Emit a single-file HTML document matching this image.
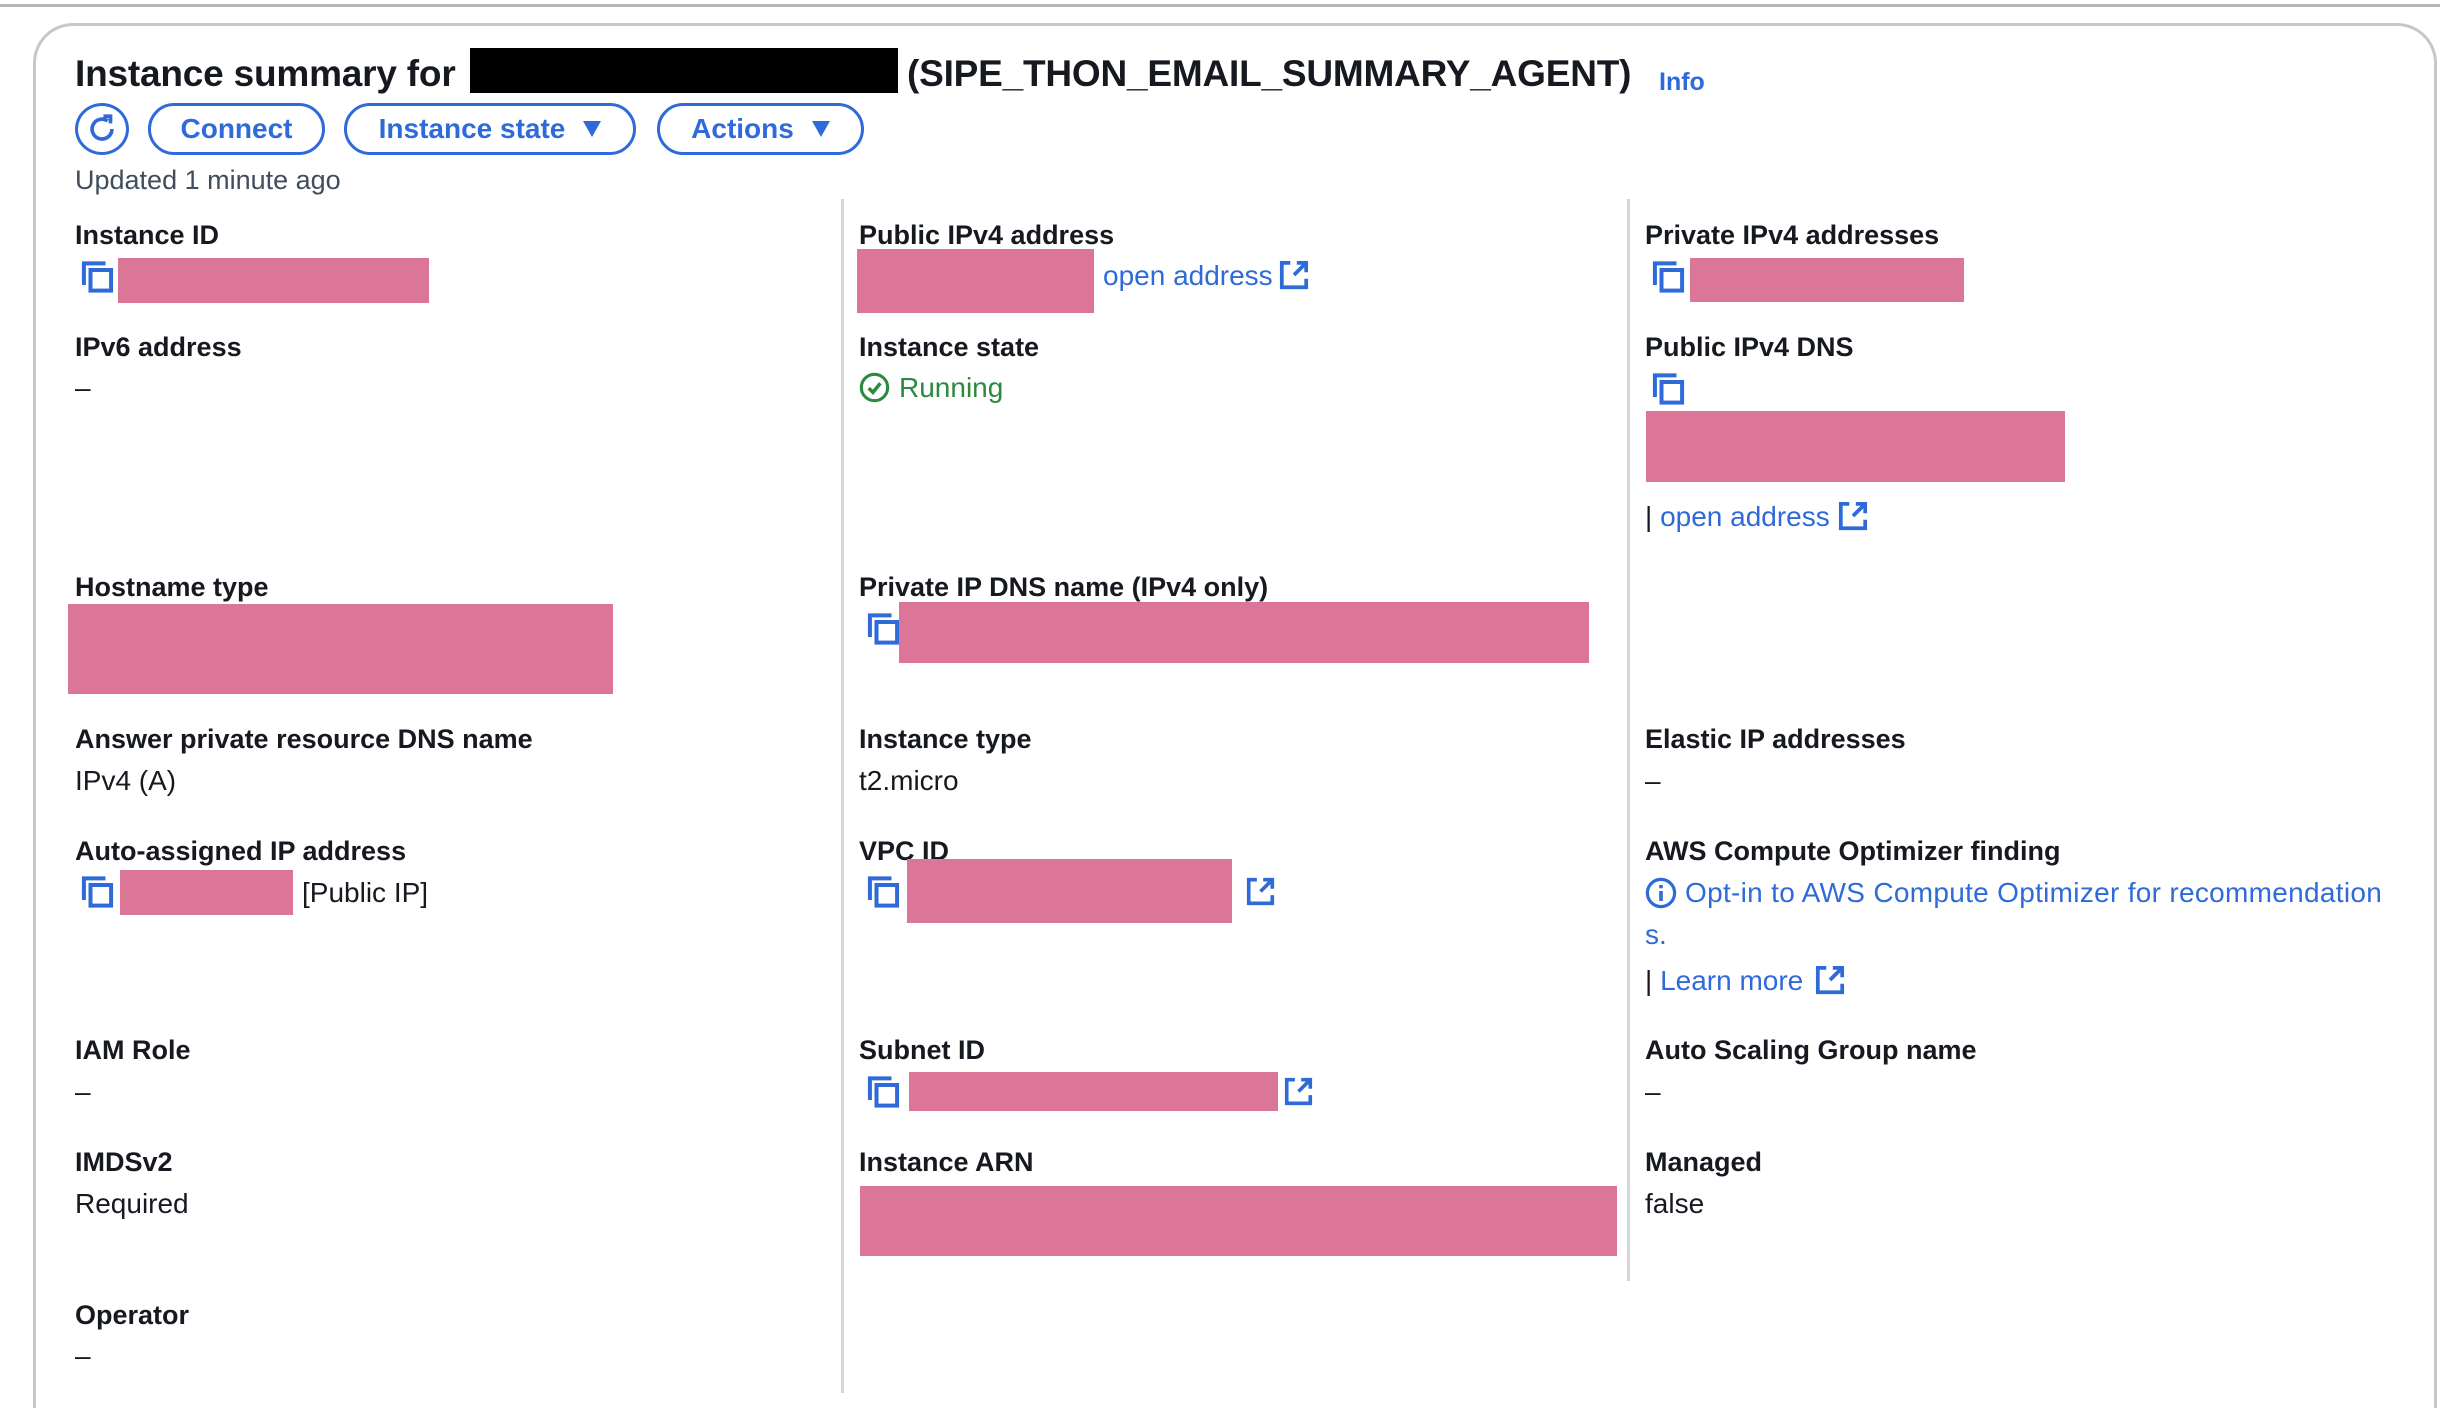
<!DOCTYPE html>
<html><head><meta charset="utf-8"><style>
*{margin:0;padding:0;box-sizing:border-box}
html,body{width:2440px;height:1408px;overflow:hidden}
body{background:#fff;position:relative;font-family:"Liberation Sans",sans-serif;color:#16191f}
.a{position:absolute;white-space:nowrap}
.topline{position:absolute;left:0;top:4px;width:2440px;height:3px;background:#b4b6ba}
.card{position:absolute;left:33px;top:23px;width:2404px;height:1385px;border:3px solid #c6c6cd;border-bottom:none;border-radius:40px 40px 0 0}
.t{font-size:37px;font-weight:bold;top:53px;letter-spacing:-0.2px}
.btn{position:absolute;top:103px;height:52px;border:3px solid #2e6ad9;border-radius:28px;color:#2e6ad9;font-weight:bold;font-size:28px;display:flex;align-items:center;justify-content:center;gap:18px}
.tri{width:0;height:0;border-left:9px solid transparent;border-right:9px solid transparent;border-top:16px solid #2e6ad9}
.l{font-size:27px;font-weight:bold}
.v{font-size:28px}
.b{color:#2e6ad9}
.p{position:absolute;background:#db7699}
.div{position:absolute;width:3px;background:#d5d6da}
svg{position:absolute}
</style></head><body>
<div class="topline"></div>
<div class="card"></div>
<div class="a t" style="left:75px">Instance summary for</div>
<div style="position:absolute;left:470px;top:48px;width:428px;height:45px;background:#000"></div>
<div class="a t" style="left:907px">(SIPE_THON_EMAIL_SUMMARY_AGENT)</div>
<div class="a b" style="left:1659px;top:68px;font-size:25px;font-weight:bold">Info</div>

<div class="btn" style="left:75px;width:54px;border-radius:50%"><svg style="position:static" width="34" height="34" viewBox="0 0 24 24"><path d="M19 12a7 7 0 1 1-3-5.7" fill="none" stroke="#2e6ad9" stroke-width="2.6"/><path d="M13 3h5v5" fill="none" stroke="#2e6ad9" stroke-width="2.6"/></svg></div>
<div class="btn" style="left:148px;width:177px">Connect</div>
<div class="btn" style="left:344px;width:292px">Instance state <span class="tri"></span></div>
<div class="btn" style="left:657px;width:207px">Actions <span class="tri"></span></div>
<div class="a" style="left:75px;top:165px;font-size:27px;color:#414d5c">Updated 1 minute ago</div>

<div class="div" style="left:841px;top:199px;height:1194px"></div>
<div class="div" style="left:1627px;top:199px;height:1082px"></div>

<!-- col1 -->
<div class="a l" style="left:75px;top:220px">Instance ID</div>
<svg style="left:81px;top:261px" width="33" height="32" viewBox="0 0 16 16"><path d="M1.2 12V1.2H12" fill="none" stroke="#2e6ad9" stroke-width="2"/><rect x="4.5" y="4.5" width="10.3" height="10.3" fill="none" stroke="#2e6ad9" stroke-width="2"/></svg>
<div class="p" style="left:118px;top:258px;width:311px;height:45px"></div>
<div class="a l" style="left:75px;top:332px">IPv6 address</div>
<div class="a v" style="left:75px;top:372px">–</div>
<div class="a l" style="left:75px;top:572px">Hostname type</div>
<div class="p" style="left:68px;top:604px;width:545px;height:90px"></div>
<div class="a l" style="left:75px;top:724px">Answer private resource DNS name</div>
<div class="a v" style="left:75px;top:765px">IPv4 (A)</div>
<div class="a l" style="left:75px;top:836px">Auto-assigned IP address</div>
<svg style="left:81px;top:876px" width="33" height="32" viewBox="0 0 16 16"><path d="M1.2 12V1.2H12" fill="none" stroke="#2e6ad9" stroke-width="2"/><rect x="4.5" y="4.5" width="10.3" height="10.3" fill="none" stroke="#2e6ad9" stroke-width="2"/></svg>
<div class="p" style="left:120px;top:870px;width:173px;height:45px"></div>
<div class="a v" style="left:302px;top:877px">[Public IP]</div>
<div class="a l" style="left:75px;top:1035px">IAM Role</div>
<div class="a v" style="left:75px;top:1076px">–</div>
<div class="a l" style="left:75px;top:1147px">IMDSv2</div>
<div class="a v" style="left:75px;top:1188px">Required</div>
<div class="a l" style="left:75px;top:1300px">Operator</div>
<div class="a v" style="left:75px;top:1340px">–</div>

<!-- col2 -->
<div class="a l" style="left:859px;top:220px">Public IPv4 address</div>
<div class="p" style="left:857px;top:249px;width:237px;height:64px"></div>
<div class="a v b" style="left:1103px;top:260px">open address</div>
<svg style="left:1279px;top:260px" width="30" height="30" viewBox="0 0 16 16"><path d="M6 1.5H1.5v13h13V10" fill="none" stroke="#2e6ad9" stroke-width="2"/><path d="M9.5 1.5h5v5M14.5 1.5L8 8" fill="none" stroke="#2e6ad9" stroke-width="2"/></svg>
<div class="a l" style="left:859px;top:332px">Instance state</div>
<svg style="left:859px;top:372px" width="31" height="31" viewBox="0 0 16 16"><circle cx="8" cy="8" r="6.8" fill="none" stroke="#2b8a3e" stroke-width="1.6"/><path d="M5 8.3l2.2 2.2L11 5.8" fill="none" stroke="#2b8a3e" stroke-width="1.8"/></svg>
<div class="a v" style="left:899px;top:372px;color:#2b8a3e">Running</div>
<div class="a l" style="left:859px;top:572px">Private IP DNS name (IPv4 only)</div>
<svg style="left:867px;top:613px" width="33" height="32" viewBox="0 0 16 16"><path d="M1.2 12V1.2H12" fill="none" stroke="#2e6ad9" stroke-width="2"/><rect x="4.5" y="4.5" width="10.3" height="10.3" fill="none" stroke="#2e6ad9" stroke-width="2"/></svg>
<div class="p" style="left:899px;top:602px;width:690px;height:61px"></div>
<div class="a l" style="left:859px;top:724px">Instance type</div>
<div class="a v" style="left:859px;top:765px">t2.micro</div>
<div class="a l" style="left:859px;top:836px">VPC ID</div>
<svg style="left:867px;top:876px" width="33" height="32" viewBox="0 0 16 16"><path d="M1.2 12V1.2H12" fill="none" stroke="#2e6ad9" stroke-width="2"/><rect x="4.5" y="4.5" width="10.3" height="10.3" fill="none" stroke="#2e6ad9" stroke-width="2"/></svg>
<div class="p" style="left:907px;top:859px;width:325px;height:64px"></div>
<svg style="left:1246px;top:877px" width="29" height="29" viewBox="0 0 16 16"><path d="M6 1.5H1.5v13h13V10" fill="none" stroke="#2e6ad9" stroke-width="2"/><path d="M9.5 1.5h5v5M14.5 1.5L8 8" fill="none" stroke="#2e6ad9" stroke-width="2"/></svg>
<div class="a l" style="left:859px;top:1035px">Subnet ID</div>
<svg style="left:867px;top:1076px" width="33" height="32" viewBox="0 0 16 16"><path d="M1.2 12V1.2H12" fill="none" stroke="#2e6ad9" stroke-width="2"/><rect x="4.5" y="4.5" width="10.3" height="10.3" fill="none" stroke="#2e6ad9" stroke-width="2"/></svg>
<div class="p" style="left:909px;top:1072px;width:369px;height:39px"></div>
<svg style="left:1284px;top:1077px" width="29" height="29" viewBox="0 0 16 16"><path d="M6 1.5H1.5v13h13V10" fill="none" stroke="#2e6ad9" stroke-width="2"/><path d="M9.5 1.5h5v5M14.5 1.5L8 8" fill="none" stroke="#2e6ad9" stroke-width="2"/></svg>
<div class="a l" style="left:859px;top:1147px">Instance ARN</div>
<div class="p" style="left:860px;top:1186px;width:757px;height:70px"></div>

<!-- col3 -->
<div class="a l" style="left:1645px;top:220px">Private IPv4 addresses</div>
<svg style="left:1652px;top:261px" width="33" height="32" viewBox="0 0 16 16"><path d="M1.2 12V1.2H12" fill="none" stroke="#2e6ad9" stroke-width="2"/><rect x="4.5" y="4.5" width="10.3" height="10.3" fill="none" stroke="#2e6ad9" stroke-width="2"/></svg>
<div class="p" style="left:1690px;top:258px;width:274px;height:44px"></div>
<div class="a l" style="left:1645px;top:332px">Public IPv4 DNS</div>
<svg style="left:1652px;top:373px" width="33" height="32" viewBox="0 0 16 16"><path d="M1.2 12V1.2H12" fill="none" stroke="#2e6ad9" stroke-width="2"/><rect x="4.5" y="4.5" width="10.3" height="10.3" fill="none" stroke="#2e6ad9" stroke-width="2"/></svg>
<div class="p" style="left:1646px;top:411px;width:419px;height:71px"></div>
<div class="a v" style="left:1645px;top:501px">| <span class="b">open address</span></div>
<svg style="left:1838px;top:501px" width="30" height="30" viewBox="0 0 16 16"><path d="M6 1.5H1.5v13h13V10" fill="none" stroke="#2e6ad9" stroke-width="2"/><path d="M9.5 1.5h5v5M14.5 1.5L8 8" fill="none" stroke="#2e6ad9" stroke-width="2"/></svg>
<div class="a l" style="left:1645px;top:724px">Elastic IP addresses</div>
<div class="a v" style="left:1645px;top:765px">–</div>
<div class="a l" style="left:1645px;top:836px">AWS Compute Optimizer finding</div>
<svg style="left:1645px;top:877px" width="32" height="32" viewBox="0 0 16 16"><circle cx="8" cy="8" r="6.8" fill="none" stroke="#2e6ad9" stroke-width="1.6"/><path d="M8 7v5M8 4v1.6" stroke="#2e6ad9" stroke-width="1.8"/></svg>
<div class="a v b" style="left:1685px;top:877px;letter-spacing:0.3px">Opt-in to AWS Compute Optimizer for recommendation</div>
<div class="a v b" style="left:1645px;top:919px">s.</div>
<div class="a v" style="left:1645px;top:965px">| <span class="b">Learn more</span></div>
<svg style="left:1815px;top:965px" width="30" height="30" viewBox="0 0 16 16"><path d="M6 1.5H1.5v13h13V10" fill="none" stroke="#2e6ad9" stroke-width="2"/><path d="M9.5 1.5h5v5M14.5 1.5L8 8" fill="none" stroke="#2e6ad9" stroke-width="2"/></svg>
<div class="a l" style="left:1645px;top:1035px">Auto Scaling Group name</div>
<div class="a v" style="left:1645px;top:1076px">–</div>
<div class="a l" style="left:1645px;top:1147px">Managed</div>
<div class="a v" style="left:1645px;top:1188px">false</div>
</body></html>
